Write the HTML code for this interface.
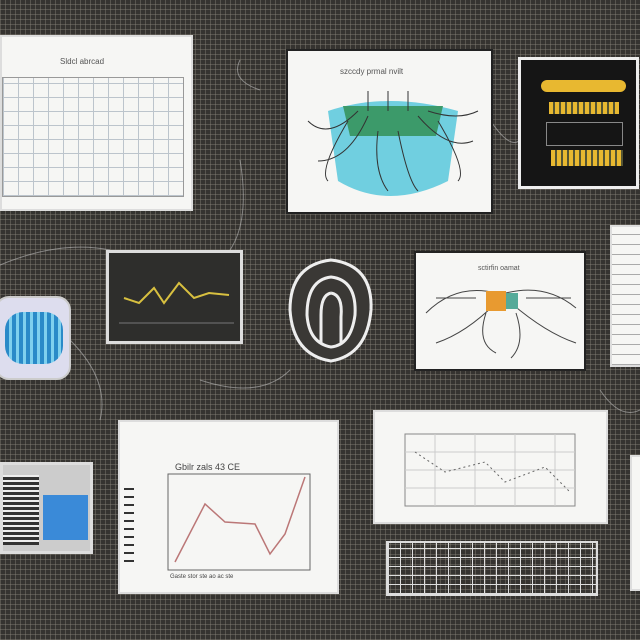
<!DOCTYPE html>
<html><head><meta charset="utf-8"><style>
html,body{margin:0;padding:0}
body{width:640px;height:640px;overflow:hidden;position:relative;font-family:"Liberation Sans",sans-serif;
background-color:#353330;
background-image:repeating-linear-gradient(0deg,rgba(140,135,125,.4) 0 1px,transparent 1px 5px),repeating-linear-gradient(90deg,rgba(140,135,125,.4) 0 1px,transparent 1px 5px);}
.p{position:absolute;background:#f6f6f4;box-sizing:border-box}
svg{position:absolute}
</style></head><body>

<svg style="left:0;top:0" width="640" height="640"><g stroke="#bbb" fill="none" stroke-width="1" opacity=".6">
<path d="M240 60 Q230 80 260 90"/><path d="M240 160 Q250 220 230 250"/><path d="M0 265 Q60 240 110 250"/><path d="M70 340 Q110 380 100 420"/><path d="M200 380 Q260 400 290 370"/><path d="M490 120 Q510 150 520 140"/><path d="M600 390 Q620 420 640 410"/></g></svg>

<div class="p" style="left:0;top:35px;width:193px;height:176px;border:2px solid #ddd">
<div style="position:absolute;left:58px;top:20px;font-size:8px;color:#555">Sldcl  abrcad</div>
<div style="position:absolute;left:0;top:40px;width:180px;height:118px;border:1px solid #999;background-image:repeating-linear-gradient(0deg,#bcc4cc 0 1px,transparent 1px 14px),repeating-linear-gradient(90deg,#bcc4cc 0 1px,transparent 1px 15px)"></div>
</div>

<div class="p" style="left:286px;top:49px;width:207px;height:165px;border:2px solid #222">
<div style="position:absolute;left:52px;top:16px;font-size:8px;color:#555">szccdy prmal nvilt</div>
<svg width="207" height="165" viewBox="0 0 207 165">
<path d="M40 60 Q100 40 170 60 L160 130 Q100 160 50 130Z" fill="#58c8dc" opacity=".85"/>
<path d="M55 55 L155 55 L148 85 L62 85Z" fill="#3c9a6a"/>
<g stroke="#333" fill="none" stroke-width="1">
<path d="M70 60 Q40 90 20 70M80 65 Q60 110 30 110M130 65 Q160 100 185 90M140 60 Q170 70 190 60M90 80 Q85 120 100 140M110 80 Q120 130 130 140M100 60 L100 40M120 60 L120 40M80 60 L80 40M60 70 Q30 120 40 130M150 70 Q180 120 170 130"/>
</g></svg>
</div>

<div class="p" style="left:518px;top:57px;width:121px;height:132px;border:3px solid #eee;background:#151515">
<div style="position:absolute;left:20px;top:20px;width:85px;height:12px;background:#e8b830;border-radius:6px"></div>
<div style="position:absolute;left:28px;top:42px;width:70px;height:12px;background:repeating-linear-gradient(90deg,#e8b830 0 4px,#553 4px 6px)"></div>
<div style="position:absolute;left:25px;top:62px;width:75px;height:22px;border:1px solid #888"></div>
<div style="position:absolute;left:30px;top:90px;width:72px;height:16px;background:repeating-linear-gradient(90deg,#e8b830 0 4px,#553 4px 6px)"></div>
</div>

<div class="p" style="left:106px;top:250px;width:137px;height:94px;border:3px solid #ddd;background:#2e2e2c">
<svg width="131" height="88"><path d="M15 45 L30 50 L45 35 L55 50 L70 30 L85 45 L100 40 L120 42" stroke="#d8c040" stroke-width="2" fill="none"/><path d="M10 70 H125" stroke="#777"/></svg>
</div>

<svg style="left:285px;top:255px" width="92" height="110"><path d="M46 5 Q88 10 86 55 Q82 100 46 106 Q8 100 5 55 Q5 10 46 5Z" fill="#3a3835" stroke="#eee" stroke-width="3"/><path d="M46 22 Q72 25 70 60 Q66 90 46 92 Q24 88 22 60 Q22 25 46 22Z" fill="none" stroke="#eee" stroke-width="3"/><path d="M46 38 Q58 40 56 62 L56 88 M36 88 L36 60 Q36 40 46 38" fill="none" stroke="#eee" stroke-width="3"/></svg>

<div class="p" style="left:414px;top:251px;width:172px;height:120px;border:2px solid #222">
<div style="position:absolute;left:62px;top:12px;font-size:7px;color:#555">sctirfin oamat</div>
<svg width="170" height="118"><g stroke="#444" fill="none"><path d="M80 40 Q40 30 10 60M80 50 Q50 80 20 90M90 40 Q130 30 160 55M95 50 Q130 80 160 90M70 60 Q60 90 80 100M100 60 Q110 90 95 105M60 45 L20 45M110 45 L155 45"/></g><rect x="70" y="38" width="20" height="20" fill="#e89a30"/><rect x="90" y="40" width="12" height="16" fill="#5a9"/></svg>
</div>

<div class="p" style="left:610px;top:225px;width:32px;height:142px;border:2px solid #ddd;background-image:repeating-linear-gradient(0deg,#aaa 0 1px,transparent 1px 10px)"></div>

<div style="position:absolute;left:-5px;top:296px;width:76px;height:84px;border-radius:14px;background:#dde;border:2px solid #ccc;box-sizing:border-box">
<div style="position:absolute;left:8px;top:14px;width:58px;height:52px;border-radius:18px;background:repeating-linear-gradient(90deg,#2a8ac8 0 4px,#7fd0ee 4px 7px)"></div></div>

<div class="p" style="left:0;top:462px;width:93px;height:92px;border:3px solid #ddd;background:#ccc">
<div style="position:absolute;left:0;top:10px;width:36px;height:70px;background:repeating-linear-gradient(0deg,#333 0 3px,#eee 3px 5px)"></div>
<div style="position:absolute;left:40px;top:30px;width:45px;height:45px;background:#3a8ad8"></div></div>

<div class="p" style="left:118px;top:420px;width:221px;height:174px;border:2px solid #ddd">
<div style="position:absolute;left:55px;top:40px;font-size:9px;color:#444">Gbilr zals 43 CE</div>
<div style="position:absolute;left:4px;top:60px;width:10px;height:80px;font-size:6px;color:#444;background:repeating-linear-gradient(0deg,#333 0 2px,transparent 2px 8px)"></div>
<svg width="221" height="174"><path d="M48 52 H190 V148 H48Z" fill="none" stroke="#666"/><path d="M55 140 L85 82 L105 100 L135 102 L150 132 L165 112 L185 55" stroke="#b77" stroke-width="1.5" fill="none"/></svg>
<div style="position:absolute;left:50px;top:152px;font-size:6px;color:#444">Gaste stor ste ao ac ste</div>
</div>

<div class="p" style="left:373px;top:410px;width:235px;height:114px;border:2px solid #ddd">
<svg width="235" height="114"><rect x="30" y="22" width="170" height="72" fill="none" stroke="#888"/><g stroke="#ccc"><path d="M30 40H200M30 58H200M30 76H200M60 22V94M100 22V94M140 22V94M180 22V94"/></g><path d="M40 40 L70 60 L110 50 L130 70 L170 55 L195 80" stroke="#666" fill="none" stroke-dasharray="2 3"/></svg></div>

<div style="position:absolute;left:386px;top:541px;width:212px;height:55px;border:2px solid #ddd;box-sizing:border-box;background:repeating-linear-gradient(0deg,#ddd 0 1px,transparent 1px 9px),repeating-linear-gradient(90deg,#ddd 0 1px,transparent 1px 12px)"></div>

<div class="p" style="left:630px;top:455px;width:12px;height:136px;border:2px solid #ddd"></div>

</body></html>
